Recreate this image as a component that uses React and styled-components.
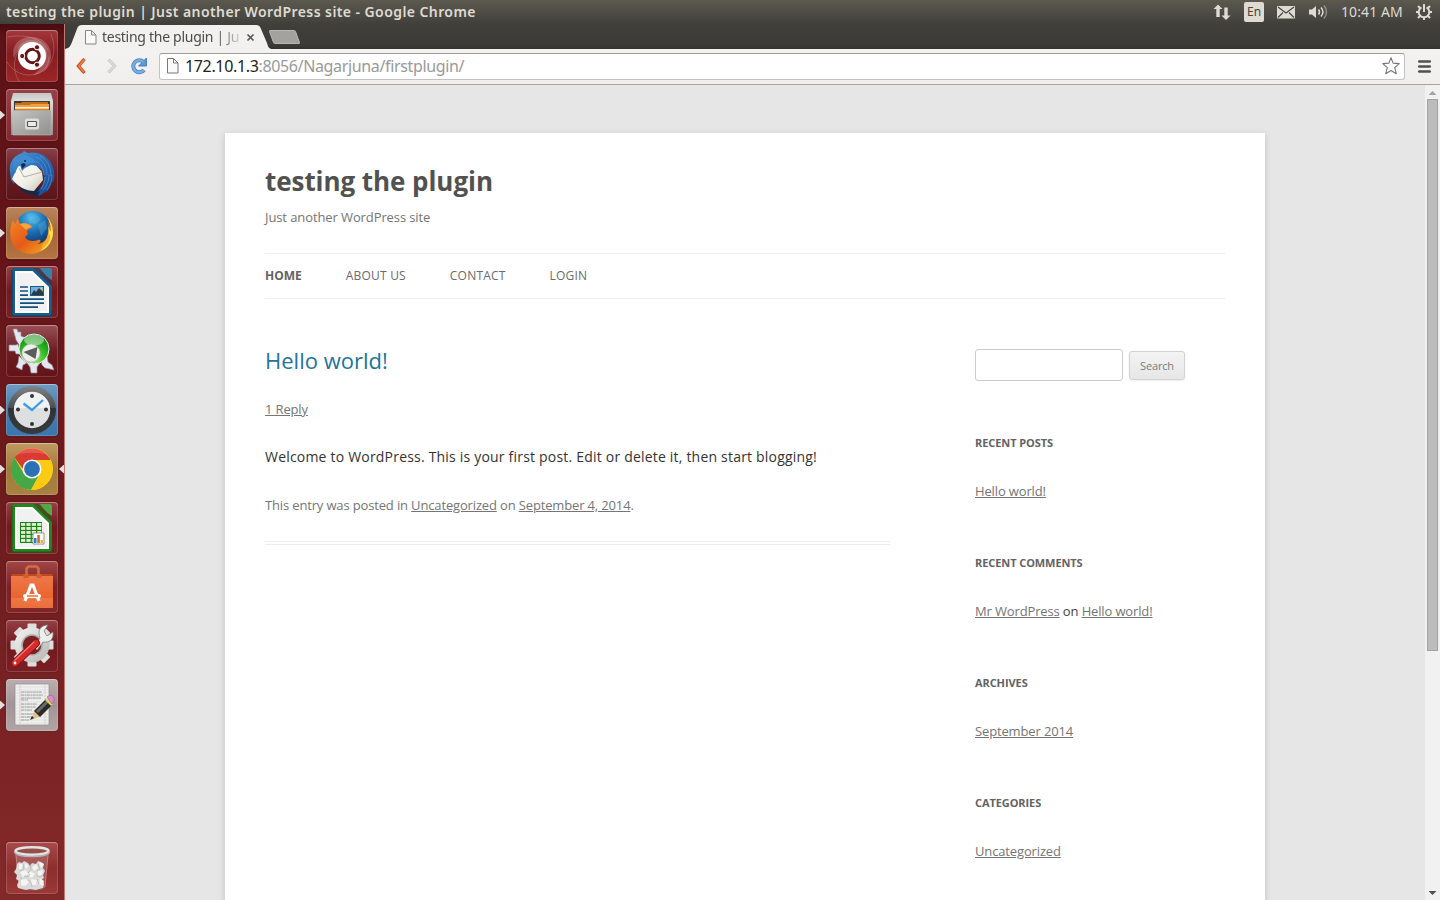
import React from 'react';
import styled, { createGlobalStyle } from 'styled-components';

const Global = createGlobalStyle`
  * { box-sizing: border-box; }
  html, body { margin: 0; padding: 0; }
  body { width: 1440px; height: 900px; overflow: hidden; background: #e6e6e6; font-family: "Open Sans", sans-serif; }
  svg { display: block; flex: none; }
`;

const Desktop = styled.div`
  display: flex;
  flex-direction: column;
  width: 1440px;
  height: 900px;
`;

const Panel = styled.header`
  display: flex;
  justify-content: space-between;
  align-items: center;
  height: 24px;
  flex: none;
  padding: 0 7px 0 6px;
  background: linear-gradient(#5c594e, #464540 80%, #403f3a);
  color: #dfdbd2;
  font-family: "Noto Sans", sans-serif;
`;

const PanelTitle = styled.span`
  font-size: 14px;
  font-weight: 600;
  letter-spacing: 0.42px;
  line-height: 24px;
  white-space: nowrap;
`;

const Indicators = styled.div`
  display: flex;
  align-items: center;
  height: 24px;
`;

const Lang = styled.span`
  width: 20px;
  height: 20px;
  margin: 0 12px 0 13px;
  border-radius: 2px;
  background: #dfdbd2;
  color: #45443e;
  font-size: 12px;
  line-height: 20px;
  text-align: center;
`;

const Time = styled.span`
  width: 62px;
  margin: 0 12px 0 11px;
  font-size: 14px;
  letter-spacing: 0.1px;
  line-height: 24px;
  white-space: nowrap;
`;

const Workspace = styled.div`
  display: flex;
  flex: 1;
  min-height: 0;
`;

const Launcher = styled.nav`
  display: flex;
  flex-direction: column;
  gap: 7px;
  width: 65px;
  flex: none;
  padding: 6px 0;
  border-right: 1px solid #c07a76;
  background: linear-gradient(#480b10, #5c1216 12px, #661519 30%, #701d1f 60%, #84292a);
`;

const LauncherItem = styled.div`
  display: flex;
  align-items: center;
  gap: 1px;
  margin-top: ${(p) => (p.$last ? 'auto' : '0')};
`;

const Pip = styled.i`
  width: 5px;
  height: 9px;
  flex: none;
  background: ${(p) => (p.$on ? '#e4dede' : 'transparent')};
  clip-path: ${(p) => (p.$right ? 'polygon(100% 0, 100% 100%, 0 50%)' : 'polygon(0 0, 100% 50%, 0 100%)')};
`;

const Tile = styled.div`
  width: 52px;
  height: 52px;
  flex: none;
  overflow: hidden;
  border-radius: 4px;
  background: ${(p) => p.$bg};
  box-shadow: inset 0 0 0 1px rgba(255, 255, 255, 0.17), inset 0 1px 0 rgba(255, 255, 255, 0.25), 0 0 2px rgba(0, 0, 0, 0.3);
`;

const Browser = styled.main`
  display: flex;
  flex-direction: column;
  flex: 1;
  min-width: 0;
  background: #e6e6e6;
`;

const TabStrip = styled.div`
  display: flex;
  height: 25px;
  flex: none;
  padding-top: 1px;
  background: linear-gradient(#403f3a, #3c3b37 20px, #34332f);
`;

const Tab = styled.div`
  display: flex;
  align-items: center;
  width: 206px;
  height: 24px;
  padding-left: 20px;
  background: #f2f1f0;
  clip-path: path('M0 24 C4 23 5 22 7 17 L12 4 C13 1 14 0 18 0 H190 C194 0 195 1 196 4 L202 18 C203 22 204 23 206 24 Z');
`;

const TabTitle = styled.span`
  width: 139px;
  margin-left: 5px;
  font-family: "Noto Sans", sans-serif;
  font-size: 14px;
  letter-spacing: -0.28px;
  line-height: 22px;
  white-space: nowrap;
  color: #4b4b4b;
  mask-image: linear-gradient(90deg, #000 114px, transparent 143px);
`;

const NewTab = styled.div`
  width: 27px;
  height: 14px;
  margin: 5px 0 0;
  border-radius: 2px;
  background: #a3a29f;
  border: 1px solid #b8b7b3;
  transform: skewX(20deg);
`;

const Toolbar = styled.div`
  display: flex;
  align-items: center;
  height: 36px;
  flex: none;
  padding: 0 9px 1px 10px;
  border-bottom: 1px solid #a6a5a3;
  background: linear-gradient(#f3f2f1, #f0efee);
`;

const Omnibox = styled.div`
  display: flex;
  align-items: center;
  width: 1246px;
  height: 27px;
  margin: 0 13px 0 11px;
  padding: 0 4px 0 6px;
  border: 1px solid #c4c3c1;
  border-top-color: #9c9b99;
  border-radius: 3px;
  background: #fff;
`;

const Address = styled.span`
  flex: 1;
  margin-left: 6px;
  font-family: "Noto Sans", sans-serif;
  font-size: 16px;
  letter-spacing: -0.35px;
  line-height: 24px;
  color: #999;
  b { font-weight: 400; color: #222; }
`;

const Viewport = styled.div`
  display: flex;
  flex: 1;
  min-height: 0;
`;

const PageArea = styled.div`
  flex: 1;
  overflow: hidden;
  padding: 48px 160px 0;
  background: #e6e6e6;
`;

const Site = styled.div`
  width: 1040px;
  height: 900px;
  padding: 24px 40px;
  background: #fff;
  box-shadow: 0 2px 6px rgba(100, 100, 100, 0.3);
`;

const SiteTitle = styled.h1`
  margin: 0;
  font-size: 26px;
  font-weight: 700;
  letter-spacing: -0.06px;
  line-height: 48px;
  color: #515151;
`;

const Tagline = styled.p`
  margin: 0 0 24px;
  font-size: 13px;
  letter-spacing: -0.1px;
  line-height: 24px;
  color: #757575;
`;

const Menu = styled.nav`
  display: flex;
  gap: 44px;
  height: 46px;
  border-top: 1px solid #ededed;
  border-bottom: 1px solid #ededed;
`;

const MenuLink = styled.a`
  font-size: 12px;
  line-height: 44px;
  letter-spacing: ${(p) => (p.$current ? 0 : '0.2px')};
  font-weight: ${(p) => (p.$current ? 700 : 400)};
  color: ${(p) => (p.$current ? '#636363' : '#6a6a6a')};
`;

const Columns = styled.div`
  display: flex;
  justify-content: space-between;
  padding-top: 48px;
`;

const Article = styled.article`
  width: 625px;
  height: 198px;
  border-bottom: 4px double #ededed;
`;

const EntryTitle = styled.h2`
  margin: 0 0 24px;
  font-size: 22px;
  font-weight: 400;
  line-height: 26px;
  color: #21759b;
`;

const Line = styled.p`
  margin: 0 0 24px;
  font-size: 13px;
  letter-spacing: -0.15px;
  line-height: 24px;
  color: #757575;
`;

const BodyText = styled(Line)`
  font-size: 14px;
  letter-spacing: 0.2px;
  color: #333;
`;

const Link = styled.a`
  color: #757575;
  text-decoration: underline;
`;

const Sidebar = styled.aside`
  width: 250px;
`;

const SearchForm = styled.form`
  display: flex;
  align-items: center;
  gap: 6px;
  height: 36px;
  margin-bottom: 48px;
`;

const SearchField = styled.input`
  width: 148px;
  height: 32px;
  border: 1px solid #ccc;
  border-radius: 3px;
  background: #fff;
`;

const SearchButton = styled.button`
  width: 56px;
  height: 29px;
  padding: 0;
  border: 1px solid #d2d2d2;
  border-radius: 3px;
  background: linear-gradient(#f4f4f4, #e6e6e6);
  box-shadow: 0 1px 2px rgba(64, 64, 64, 0.1);
  font-family: "Open Sans", sans-serif;
  font-size: 11px;
  letter-spacing: -0.15px;
  color: #7c7c7c;
`;

const Widget = styled.section`
  margin-bottom: 48px;
`;

const WidgetTitle = styled.h3`
  margin: 0 0 24px;
  font-size: 11px;
  font-weight: 700;
  letter-spacing: -0.08px;
  line-height: 24px;
  color: #636363;
`;

const WidgetText = styled.div`
  font-size: 13px;
  letter-spacing: -0.14px;
  line-height: 24px;
  color: #444;
`;

const ScrollBar = styled.div`
  display: flex;
  flex-direction: column;
  align-items: center;
  width: 15px;
  padding: 6px 0 5px;
  background: #f1f1f1;
`;

const Thumb = styled.div`
  width: 11px;
  height: 552px;
  margin: 4px 0 auto;
  border: 1px solid #a3a3a3;
  background: #bcbcbc;
`;

const Triangle = styled.i`
  width: 8px;
  height: 4px;
  background: ${(p) => (p.$down ? '#505050' : '#a3a3a3')};
  clip-path: ${(p) => (p.$down ? 'polygon(0 0, 100% 0, 50% 100%)' : 'polygon(0 100%, 100% 100%, 50% 0)')};
`;

const Canvas = ({ children }) => (
  <svg width="52" height="52" viewBox="0 0 52 52">{children}</svg>
);

const Dash = () => (
  <Canvas>
    <g fill="none" stroke="#fff" strokeLinecap="round">
      <path d="M2 7c16-3 33 0 40 13M1 32c5 8 13 13 22 13 14 0 20-9 20-18M45 4c5 13 4 27-7 37M13 51C7 42 7 30 12 22" strokeWidth="1" opacity=".2" />
    </g>
    <path d="M8 28c-4-14 8-22 18-21 12 0 20 10 19 20-1 11-9 17-18 18 16-10 13-30-1-30-8 0-15 5-18 13z" fill="#fff" opacity=".22" />
    <path d="M12 26c-2-11 6-16 14-16 9 0 15 7 15 15-1 9-7 14-14 15" fill="#fff" opacity=".2" />
    <circle cx="26" cy="26" r="14" fill="#fff" />
    <circle cx="26.500" cy="26" r="6.800" fill="none" stroke="#63151a" strokeWidth="3" />
    <g fill="#63151a" stroke="#fff" strokeWidth="1"><circle cx="16.200" cy="26" r="2.600" /><circle cx="31" cy="17.300" r="2.600" /><circle cx="31" cy="34.700" r="2.600" /></g>
  </Canvas>
);

const Files = () => (
  <Canvas>
    <defs>
      <linearGradient id="cab" x2="0" y2="1"><stop stopColor="#c4c4c2" /><stop offset=".2" stopColor="#dededc" /><stop offset="1" stopColor="#8c8c8a" /></linearGradient>
      <linearGradient id="front" x2="1" y2="1"><stop stopColor="#c4c4c2" /><stop offset="1" stopColor="#8f8f8d" /></linearGradient>
    </defs>
    <path d="M7 4h38l2 8v34H5V12z" fill="url(#cab)" />
    <path d="M8 12h36v10H8z" fill="#3d3b38" />
    <path d="M9 14h6l1-1h26v8H9z" fill="#c56e1c" />
    <path d="M9 16h15l1-1h18v6H9z" fill="#f3a13e" />
    <path d="M9 18h34v1.500H9z" fill="#fff2dc" />
    <path d="M9 20h34v1.500H9z" fill="#de8020" />
    <path d="M7 21.500h38V46H7z" fill="url(#front)" stroke="#bdbdbb" strokeWidth=".6" />
    <rect x="19" y="29.500" width="14" height="11" rx="2" fill="#dededc" />
    <rect x="21.500" y="32.500" width="9" height="5" rx=".8" fill="#ececea" stroke="#585856" strokeWidth="1.200" />
  </Canvas>
);

const Thunderbird = () => (
  <Canvas>
    <defs>
      <linearGradient id="tb" x2="1" y2="1"><stop stopColor="#4a97d6" /><stop offset=".5" stopColor="#2a6db8" /><stop offset="1" stopColor="#17418a" /></linearGradient>
      <linearGradient id="env" x2="1" y2="1"><stop stopColor="#fffffa" /><stop offset=".6" stopColor="#efeee6" /><stop offset="1" stopColor="#c4c2b6" /></linearGradient>
    </defs>
    <path d="M12 38c3 5 9 8 17 10l6 1 1-10-10 3z" fill="#1b2745" />
    <path d="M10 8C5 12 3 18 4 24l1 8 3 4 3-8 8-14z" fill="url(#tb)" />
    <path d="M12 18 29 16l7 8 1 8-9 11C20 43 12 39 6 31z" fill="url(#env)" />
    <path d="m13 20 5 9 18-5" fill="none" stroke="#aaa89e" strokeWidth=".9" />
    <path d="M8 11c3-4 5-5 8-6l2-2 2 1 2 1c8-2 16 1 21 7 5 7 7 14 4 23l-1-2c-1 6-4 10-7 12l1-3c-2 3-4 5-8 6l2-5-3 1c6-6 8-11 7-18-2-5-6-9-13-9l-6 3-3 3-2-6-3 3-2 6c-2-5-2-10-1-15z" fill="url(#tb)" />
    <g fill="none" stroke="#61a9e3" strokeWidth=".7" opacity=".75"><path d="M30 9c7 3 11 9 11 18M34 8c7 4 11 10 11 20M30 13c5 3 8 8 8 14M43 26c0 7-2 12-6 16M39 29c0 5-2 9-4 12M46 27c0 6-2 11-5 15" /></g>
    <path d="M11 11c3-4 9-5 13-2 4 2 5 4 6 6-5-1-8 0-11 3l-3 3c0-4-2-7-5-10z" fill="#3f8cd0" />
    <path d="m15 16 3-1 2 2-4 4z" fill="#17294c" />
    <circle cx="19" cy="13" r="1" fill="#142b50" />
  </Canvas>
);

const Firefox = () => (
  <Canvas>
    <defs>
      <radialGradient id="globe" cx=".45" cy=".2" r=".8"><stop stopColor="#4dbdea" /><stop offset=".5" stopColor="#1c6bb0" /><stop offset="1" stopColor="#103060" /></radialGradient>
      <linearGradient id="fox" x2="1" y2="1"><stop stopColor="#f38b25" /><stop offset=".5" stopColor="#e55a1a" /><stop offset="1" stopColor="#f3b31f" /></linearGradient>
    </defs>
    <circle cx="27" cy="22" r="18" fill="url(#globe)" />
    <path d="M20 8c6-4 13 0 14 5l-4 4-6-1zM32 18l7-5 2 8-6 8z" fill="#68c3e8" opacity=".3" />
    <path d="M41 10c8 8 8 22 0 30C32 49 17 49 9 40 3 33 3 21 7 13l2 4 3-6 2 6c3-1 7-1 10 1l2 2c-1 2-4 2-5 4l1 3-3 3c2 4 8 5 13 3 4-1 3 3-1 4 12-1 13-14 11-23l3 6c0-4-1-7-4-10z" fill="url(#fox)" />
    <path d="M41 10c8 8 8 22 0 30-2 2-5 3-7 4 8-6 10-15 8-25l3 6c0-5-1-10-4-15z" fill="#ffe14d" />
    <path d="M37 37c3-3 5-7 5-13l2 5c0 6-4 11-9 14z" fill="#f9ae2a" />
    <path d="M14 17c3-1 7-1 10 1l2 2c-3 1-6 2-6 3l-3-3z" fill="#f7a63a" />
  </Canvas>
);

const DocBase = ({ dark, mid, corner }) => (
  <>
    <path d="M8 2h19.500L46 20v28a2 2 0 0 1-2 2H8a2 2 0 0 1-2-2V4a2 2 0 0 1 2-2z" fill={mid} />
    <path d="M6 4v44a2 2 0 0 0 2 2h36a2 2 0 0 0 2-2v-3" fill="none" stroke={dark} strokeWidth="1" />
    <path d="M27.500 2h5L46 15.500V20z" fill={dark} opacity=".55" />
    <path d="M34 2h10a2 2 0 0 1 2 2v10q-6-3-12-12z" fill={corner} />
    <path d="M9 5h17.500L43 21v26H9z" fill="#fff" />
    <path d="M11 7h14.500L41 22v23H11z" fill="#f1f1f1" />
  </>
);

const Writer = () => (
  <Canvas>
    <DocBase dark="#0b3f66" mid="#155d8c" corner="#3583ad" />
    <g stroke="#11517f" strokeWidth="1.700"><path d="M14 21h8M14 25h8M14 29.200h8M14 33.200h24M14 37.200h24M14 41.200h18" /></g>
    <path d="M24 20h14v10H24z" fill="#155d8c" />
    <path d="M25 21h12v8H25z" fill="#72b2d6" />
    <path d="m25 29 3-5 2 2 3-4 4 4v3z" fill="#2c3b43" />
    <circle cx="35.500" cy="22.500" r="1.100" fill="#f1cb45" />
  </Canvas>
);

const GreenBall = () => (
  <Canvas>
    <defs>
      <radialGradient id="gb" cx=".45" cy=".85" r=".9"><stop stopColor="#a9f07c" /><stop offset=".5" stopColor="#2fbd24" /><stop offset="1" stopColor="#0c7a10" /></radialGradient>
    </defs>
    <g fill="#e6e6ee" stroke="#8d8d98" strokeWidth=".7" strokeLinejoin="round">
      <path d="m7 4 4 0 1 3 3 0 0 4 5 2-6 8-4-6-1-4z" />
      <path d="M3 20h7l2-1 3 10-5 0-1-3-6 0z" />
      <path d="m13 31 8 7-4 2-1 5-6-3 2-4z" />
      <path d="M21 38h13l-3 4 0 6h-6l-1-6z" />
      <path d="m35 36 6-6 1 7 4 3 2 5-4-1-5-1-3-3z" />
    </g>
    <circle cx="28" cy="24" r="15" fill="url(#gb)" stroke="#ededed" strokeWidth="1" />
    <ellipse cx="28" cy="15" rx="10" ry="5.500" fill="#fff" opacity=".45" />
    <circle cx="25" cy="28" r="9" fill="#eee" stroke="#bbb" strokeWidth=".7" />
    <path d="M17.500 27 31.500 22 29.500 34z" fill="#5a5d5a" />
  </Canvas>
);

const Clock = () => (
  <Canvas>
    <defs><linearGradient id="ring" x2="0" y2="1"><stop stopColor="#818385" /><stop offset=".45" stopColor="#4b4d50" /><stop offset=".46" stopColor="#303235" /><stop offset="1" stopColor="#37393b" /></linearGradient></defs>
    <circle cx="26" cy="26" r="24" fill="url(#ring)" />
    <circle cx="26" cy="26" r="18.200" fill="#dedfe1" />
    <path d="M8 26a18 18 0 0 1 36 0c-9-3-25-3-36 0z" fill="#f0f1f2" />
    <g fill="#333"><circle cx="26" cy="12" r="2" /><circle cx="40" cy="25.500" r="2" /><circle cx="26" cy="40" r="2" /><circle cx="12" cy="25.500" r="2" /></g>
    <path d="M17.500 19.500 26 26 37 16" fill="none" stroke="#3a9de8" strokeWidth="2.300" />
  </Canvas>
);

const Chrome = () => (
  <Canvas>
    <circle cx="26" cy="26" r="21" fill="#fccf1d" />
    <path d="M8.300 14.500A21 21 0 0 0 25 47l9-16-8-5-8 5z" fill="#44a847" />
    <path d="M8.500 14.500A21 21 0 0 1 44.500 17H26a9 9 0 0 0-9 9z" fill="#d93a31" />
    <path d="M10 12A21 21 0 0 1 42 12C33 9 19 9 10 12z" fill="#f07a70" opacity=".5" />
    <path d="M25 47a21 21 0 0 0 19.500-30H26l8 13z" fill="#fbcb14" />
    <circle cx="26" cy="26" r="9.500" fill="#fff" /><circle cx="26" cy="26" r="7.900" fill="#2c70b6" />
  </Canvas>
);

const Calc = () => (
  <Canvas>
    <DocBase dark="#126312" mid="#21861b" corner="#52a843" />
    <path d="M14 20h22v21H14z" fill="#18811a" />
    <g fill="#dcefc8">{[21, 25, 29, 33, 37].map((y) => [15, 20.4, 25.8, 31.2].map((x) => <rect key={`${x}-${y}`} x={x} y={y} width="4.200" height="2.900" />))}</g>
    <path d="M27 31h11v11H27z" fill="#fff" stroke="#807f7c" strokeWidth=".8" />
    <path d="M28 36h2.500v5H28z" fill="#277fc2" /><path d="M31.300 33h2.500v8h-2.500z" fill="#c96a1d" /><path d="M34.600 38H37v3h-2.400z" fill="#dfbe20" />
  </Canvas>
);

const Software = () => (
  <Canvas>
    <defs><linearGradient id="bag" x2="0" y2="1"><stop stopColor="#ed7849" /><stop offset="1" stopColor="#e95b21" /></linearGradient></defs>
    <path d="M5 15h42v32H5z" fill="url(#bag)" />
    <path d="M5 37h42v10H5z" fill="#fff" opacity=".12" />
    <path d="M5 15h42l-1-2H6z" fill="#bd4a1d" />
    <path d="M20.500 17V7.500l2-2h8l2 2V17" fill="none" stroke="#d36b43" strokeWidth="2.600" />
    <path d="M17.500 13h5v4h-5zM30.500 13h5v4h-5z" fill="#d25d31" />
    <path d="M19 40 25 24h2l6 16" fill="none" stroke="#fff" strokeWidth="3.200" />
    <rect x="17" y="33" width="18" height="4" rx="2" fill="#fff" /><path d="M21 35h11" stroke="#ea6932" strokeWidth="1.400" />
  </Canvas>
);

const Settings = () => (
  <Canvas>
    <defs><linearGradient id="gear" x2="1" y2="1"><stop stopColor="#f5f5f4" /><stop offset="1" stopColor="#b4b4b2" /></linearGradient></defs>
    {[0, 45, 90, 135].map((a) => <rect key={a} x="21.500" y="3.500" width="9" height="43" rx="1" transform={`rotate(${a} 26 25)`} fill="#dededc" />)}
    <circle cx="26" cy="25" r="17.500" fill="url(#gear)" />
    <circle cx="26" cy="25" r="10" fill="#7d2024" stroke="#aaa" strokeWidth="1.500" />
    <path d="M28 27 34 18C31 10 35 5 42 5l-4 6 3 5 6-4c1 8-4 11-10 10l-6 8z" fill="#eeeeec" stroke="#7e7e7d" strokeWidth=".8" />
    <path d="M9 43 30 23" stroke="#8c1014" strokeWidth="8" strokeLinecap="round" />
    <path d="M9 43 30 23" stroke="#d52a2a" strokeWidth="6.300" strokeLinecap="round" />
    <path d="M9 40 28 22" stroke="#f17a76" strokeWidth="1.200" strokeLinecap="round" />
    <circle cx="9" cy="43" r="1.400" fill="#fff" />
  </Canvas>
);

const Editor = () => (
  <Canvas>
    <path d="M9 5h34v41H9z" fill="#f0f1ef" stroke="#8e8d89" strokeWidth=".7" />
    <g stroke="#aab7c7" strokeWidth=".3">{[8, 11, 14, 17, 20, 23, 26, 29, 32, 35, 38, 41, 44].map((y) => <path key={y} d={`M9.500 ${y}h33`} />)}</g>
    <path d="M14 5v41M39 5v41" stroke="#e5aaa9" strokeWidth=".5" />
    <g stroke="#777" strokeWidth=".7" strokeDasharray="3 .5 2 .4"><path d="M15 13h21M15 16h22M15 19h20M15 21h7M15 25h16M15 28h15M15 31h11M15 35h15M15 38h14M15 41h8" /></g>
    <path d="m25 41 4-11 7 7z" fill="#e2c08f" /><path d="m24 41 2-4 2 2z" fill="#222" />
    <path d="m28 32 12-12 6 6-12 12z" fill="#292a29" />
    <path d="m30 32 11-11 2 2-11 11z" fill="#6a6b67" />
    <path d="m39 21 2-2 6 6-2 2z" fill="#d9d65c" /><path d="m41 18 3-2q5 1 4 6l-2 3z" fill="#dd8cc8" stroke="#9a4b84" strokeWidth=".5" />
  </Canvas>
);

const Trash = () => (
  <Canvas>
    <path d="M9 10h34l-4 36H13z" fill="#e9d1ce" opacity=".22" />
    <path d="M10 13 13 45M42 13 39 45" stroke="#e0cccb" strokeWidth=".6" opacity=".6" />
    <ellipse cx="26" cy="46.500" rx="12" ry="1.800" fill="#777" opacity=".7" />
    <path d="m11 22 2-2 3 1 2-2 4 2 2 3 2-3 4 1 2-3 3 1 3 2-1 4 2 3-2 4 1 3-3 2 3 4-1 4-4 1-3 1-6-1-4 1-4-1-4-1-1-3 2-4-3-2 1-4-3-3 2-3z" fill="#dadad8" />
    <g fill="#f4f4f2">
      <path d="m13 22 4 0-1 5-3 0zM19 21l4 3-4 3zM26 25l4-3 2 4-4 3zM33 20l5 2-3 4zM14 30l6-2 2 4-5 3zM24 29l5 3-3 4-4-2zM32 29l5-1-1 5-4 1zM15 38l5-1 3 3-4 4-4-1zM25 37l6 1-1 5-5 0zM34 36l4 3-1 5-4-2z" />
    </g>
    <g fill="none" stroke="#afafac" strokeWidth=".7">
      <path d="m17 22 1 5-4 2M24 22l1 6-3 3M32 22l2 5-3 2M18 34l4 1 2-3M30 33l4 2 4-3M16 37l-2-2M22 38l3 2 1 5M31 37l2 5" />
    </g>
    <ellipse cx="26" cy="9" rx="16.500" ry="3.800" fill="#93514e" stroke="#e4e4e2" strokeWidth="2.600" />
    <path d="M8.500 10c2 6 33 6 35 0" fill="none" stroke="#b5b5b3" strokeWidth="1.300" />
  </Canvas>
);

const glass = 'linear-gradient(#954044, #71191e 48%, #782024)';
const apps = [
  { Icon: Dash, bg: 'linear-gradient(#a3383c, #851c20 45%, #9c2627)' },
  { Icon: Files, bg: 'linear-gradient(#984047, #81282f)', running: true },
  { Icon: Thunderbird, bg: 'linear-gradient(#883f48, #682029 45%, #5b1419)' },
  { Icon: Firefox, bg: 'linear-gradient(#bd855d, #a3653a 50%, #b47542)', running: true },
  { Icon: Writer, bg: glass },
  { Icon: GreenBall, bg: 'linear-gradient(#9a5057, #6b1d22 50%, #651318)' },
  { Icon: Clock, bg: 'linear-gradient(#6f9bc2, #467cad 50%, #3976ac)', running: true },
  { Icon: Chrome, bg: 'linear-gradient(#bf9a60, #a27a3b 50%, #a98242)', running: true, active: true },
  { Icon: Calc, bg: glass },
  { Icon: Software, bg: 'linear-gradient(#a34647, #7c2023 50%, #812527)' },
  { Icon: Settings, bg: glass },
  { Icon: Editor, bg: 'linear-gradient(#bcadb0, #a39498 50%, #b2a5a6)', running: true },
];

const Speaker = styled.svg`
  margin-left: 12px;
`;

const CloseIcon = styled.svg`
  margin-left: 5px;
`;

const NavIcon = styled.svg`
  margin-left: ${(p) => p.$gap}px;
`;

export default function App() {
  return (
    <>
      <Global />
      <Desktop>
        <Panel>
          <PanelTitle>testing the plugin | Just another WordPress site - Google Chrome</PanelTitle>
          <Indicators>
            <svg width="18" height="18" viewBox="0 0 18 18" fill="#dfdbd2"><path d="M5 1.500 9.500 6H6.700v8H3.300V6H.5zM13 17 8.500 12.500h2.800v-8h3.400v8h2.800z" /></svg>
            <Lang>En</Lang>
            <svg width="20" height="14" viewBox="0 0 20 14"><rect x="1" y="1" width="18" height="12.500" rx=".5" fill="#dfdbd2" /><path d="m2 2 8 6 8-6M2 12.500l5-5M18 12.500l-5-5" fill="none" stroke="#45443e" strokeWidth="1.100" /></svg>
            <Speaker width="22" height="18" viewBox="0 0 22 18"><path d="M1 6.500h3L8 3v12l-4-3.500H1z" fill="#dfdbd2" /><g fill="none" stroke="#dfdbd2" strokeWidth="1.500"><path d="M10.500 6.500q2 2.500 0 5M13 4.500q4 4.500 0 9" /><path d="M16 2.500q5 6.500 0 13" opacity=".45" /></g></Speaker>
            <Time>10:41 AM</Time>
            <svg width="18" height="18" viewBox="0 0 18 18" fill="none" stroke="#dfdbd2"><path d="M6.500 4.300a5.300 5.300 0 1 0 5 0" strokeWidth="2" /><path d="M9 1v8" strokeWidth="2" /><path d="M3 3l2 2M15 3l-2 2M1 9h3M14 9h3M3 15l2-2M15 15l-2-2M9 14v3" strokeWidth="2" /></svg>
          </Indicators>
        </Panel>
        <Workspace>
          <Launcher>
            {apps.map(({ Icon, bg, running, active }, i) => (
              <LauncherItem key={i}>
                <Pip $on={running} />
                <Tile $bg={bg}><Icon /></Tile>
                <Pip $on={active} $right />
              </LauncherItem>
            ))}
            <LauncherItem $last>
              <Pip />
              <Tile $bg="linear-gradient(#a84b4b, #8d2d2e 50%, #9b3938)"><Trash /></Tile>
            </LauncherItem>
          </Launcher>
          <Browser>
            <TabStrip>
              <Tab>
                <svg width="12" height="15" viewBox="0 0 12 15" fill="#fafafa" stroke="#858585"><path d="M.5.5h6l4.500 4.500v9H.5zM6.500.5V5H11" /></svg>
                <TabTitle>testing the plugin | Ju</TabTitle>
                <CloseIcon width="9" height="9" viewBox="0 0 9 9"><path d="m1.500 1.500 6 6m0-6-6 6" stroke="#555" strokeWidth="1.700" /></CloseIcon>
              </Tab>
              <NewTab />
            </TabStrip>
            <Toolbar>
              <svg width="12" height="18" viewBox="0 0 12 18"><path d="M9.500 2 3.500 9l6 7" fill="none" stroke="#c5461b" strokeWidth="3.400" /><path d="M9.300 2.500 3.800 9l5.500 6.500" fill="none" stroke="#ee7c42" strokeWidth="1.900" /></svg>
              <NavIcon $gap={19} width="12" height="18" viewBox="0 0 12 18"><path d="m2.500 2.500 6 6.500-6 6.500" fill="none" stroke="#c8c7c4" strokeWidth="3.200" /><path d="m2.800 3 5.500 6-5.500 6" fill="none" stroke="#dddcd9" strokeWidth="1.700" /></NavIcon>
              <NavIcon $gap={12} width="18" height="18" viewBox="0 0 18 18"><path d="M13.500 5A6 6 0 1 0 14 13" fill="none" stroke="#477fc0" strokeWidth="4" /><path d="M16.500 1v8h-8z" fill="#5c96d3" stroke="#477fc0" /><path d="M13.500 5A6 6 0 1 0 14 13" fill="none" stroke="#78aee2" strokeWidth="2.400" /></NavIcon>
              <Omnibox>
                <svg width="13" height="16" viewBox="0 0 13 16" fill="#fafafa" stroke="#777"><path d="M1.500.5h6l4.500 4.500v10H1.500zM7.500.5V5H12" /></svg>
                <Address><b>172.10.1.3</b>:8056/Nagarjuna/firstplugin/</Address>
                <svg width="18" height="18" viewBox="0 0 18 18"><path d="m9 .8 2.100 5.300 6.100.5-4.500 4 1.600 6.100L9 13.500l-5.300 3.200 1.600-6.100-4.500-4 6.100-.5z" fill="#fff" stroke="#777" strokeWidth="1.100" strokeLinejoin="round" /></svg>
              </Omnibox>
              <svg width="13" height="13" viewBox="0 0 13 13"><path d="M1.200 1.500h10.600M1.200 6.500h10.600M1.200 11.500h10.600" stroke="#50504e" strokeWidth="2.600" strokeLinecap="round" /></svg>
            </Toolbar>
            <Viewport>
              <PageArea>
                <Site>
                  <SiteTitle>testing the plugin</SiteTitle>
                  <Tagline>Just another WordPress site</Tagline>
                  <Menu>
                    <MenuLink $current>HOME</MenuLink>
                    <MenuLink>ABOUT US</MenuLink>
                    <MenuLink>CONTACT</MenuLink>
                    <MenuLink>LOGIN</MenuLink>
                  </Menu>
                  <Columns>
                    <Article>
                      <EntryTitle>Hello world!</EntryTitle>
                      <Line><Link>1 Reply</Link></Line>
                      <BodyText>Welcome to WordPress. This is your first post. Edit or delete it, then start blogging!</BodyText>
                      <Line>This entry was posted in <Link>Uncategorized</Link> on <Link>September 4, 2014</Link>.</Line>
                    </Article>
                    <Sidebar>
                      <SearchForm>
                        <SearchField />
                        <SearchButton type="button">Search</SearchButton>
                      </SearchForm>
                      <Widget><WidgetTitle>RECENT POSTS</WidgetTitle><WidgetText><Link>Hello world!</Link></WidgetText></Widget>
                      <Widget><WidgetTitle>RECENT COMMENTS</WidgetTitle><WidgetText><Link>Mr WordPress</Link> on <Link>Hello world!</Link></WidgetText></Widget>
                      <Widget><WidgetTitle>ARCHIVES</WidgetTitle><WidgetText><Link>September 2014</Link></WidgetText></Widget>
                      <Widget><WidgetTitle>CATEGORIES</WidgetTitle><WidgetText><Link>Uncategorized</Link></WidgetText></Widget>
                    </Sidebar>
                  </Columns>
                </Site>
              </PageArea>
              <ScrollBar>
                <Triangle />
                <Thumb />
                <Triangle $down />
              </ScrollBar>
            </Viewport>
          </Browser>
        </Workspace>
      </Desktop>
    </>
  );
}
